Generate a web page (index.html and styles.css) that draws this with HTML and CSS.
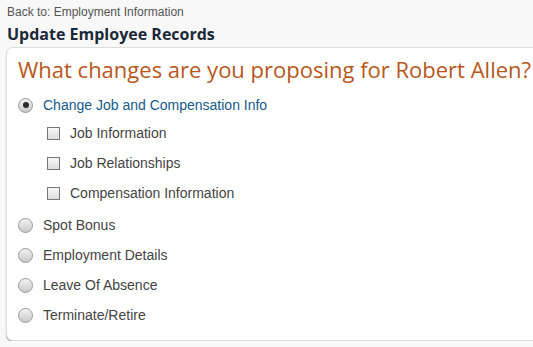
FILE: index.html
```html
<!DOCTYPE html>
<html lang="en">
<head>
    <meta charset="UTF-8">
    <title>Update Employee Records</title>
    <link rel="stylesheet" href="styles.css">
</head>
<body>
    <div class="page">
        <a class="back-link" href="#">Back to: Employment Information</a>
        <h1 class="page-title">Update Employee Records</h1>

        <!-- Change type selection -->
        <div class="card">
            <h2 class="question">What changes are you proposing for Robert Allen?</h2>
            <ul class="options">
                <li class="option selected"><span class="radio checked"></span>Change Job and Compensation Info</li>
                <li class="option sub"><span class="checkbox"></span>Job Information</li>
                <li class="option sub"><span class="checkbox"></span>Job Relationships</li>
                <li class="option sub"><span class="checkbox"></span>Compensation Information</li>
                <li class="option"><span class="radio"></span>Spot Bonus</li>
                <li class="option"><span class="radio"></span>Employment Details</li>
                <li class="option"><span class="radio"></span>Leave Of Absence</li>
                <li class="option"><span class="radio"></span>Terminate/Retire</li>
            </ul>
        </div>
    </div>
</body>
</html>
```

FILE: styles.css
```css
/* General */
body {
    margin: 0;
    padding: 0;
    background: #f8f8f8;
    font-family: 'Liberation Sans', Arial, sans-serif;
    overflow: hidden;
}

.page {
    width: 600px;
    padding: 5px 0 0 6px;
}

/* Header */
.back-link {
    display: block;
    margin-left: 1px;
    font-size: 12px;
    line-height: 14px;
    color: #555;
    text-decoration: none;
}

.page-title {
    margin: 4px 0 0 1px;
    font-family: 'Open Sans', sans-serif;
    font-size: 16px;
    font-weight: 700;
    line-height: 22px;
    color: #1b2838;
}

/* Card */
.card {
    margin-top: 2px;
    background: #fff;
    border: 1px solid #dcdcdc;
    border-radius: 7px;
    box-shadow: 0 1px 1px rgba(0, 0, 0, 0.35);
    padding: 6px 0 10px 11px;
}

.question {
    margin: 0;
    font-family: 'Open Sans', sans-serif;
    font-size: 22px;
    font-weight: 400;
    line-height: 30px;
    color: #b8571c;
}

.options {
    list-style: none;
    margin: 6px 0 0;
    padding: 0;
}

.option {
    display: flex;
    align-items: center;
    gap: 10px;
    height: 30px;
    box-sizing: border-box;
    font-size: 14px;
    color: #444;
}

.option.selected {
    color: #165a8a;
}

/* sub options sit a little higher than the radio rows */
.option.sub {
    padding: 0 0 4px 29px;
    gap: 10px;
}

/* Controls */
.radio {
    width: 13px;
    height: 13px;
    border: 1px solid #9a9a9a;
    border-radius: 50%;
    background: linear-gradient(#f2f2f2, #c9c9c9);
    display: flex;
    align-items: center;
    justify-content: center;
}

.radio.checked::after {
    content: '';
    width: 6px;
    height: 6px;
    border-radius: 50%;
    background: #2a2a2a;
}

.checkbox {
    width: 11px;
    height: 11px;
    border: 1px solid #777;
    background: linear-gradient(#f7f7f7, #dedede);
}
```
